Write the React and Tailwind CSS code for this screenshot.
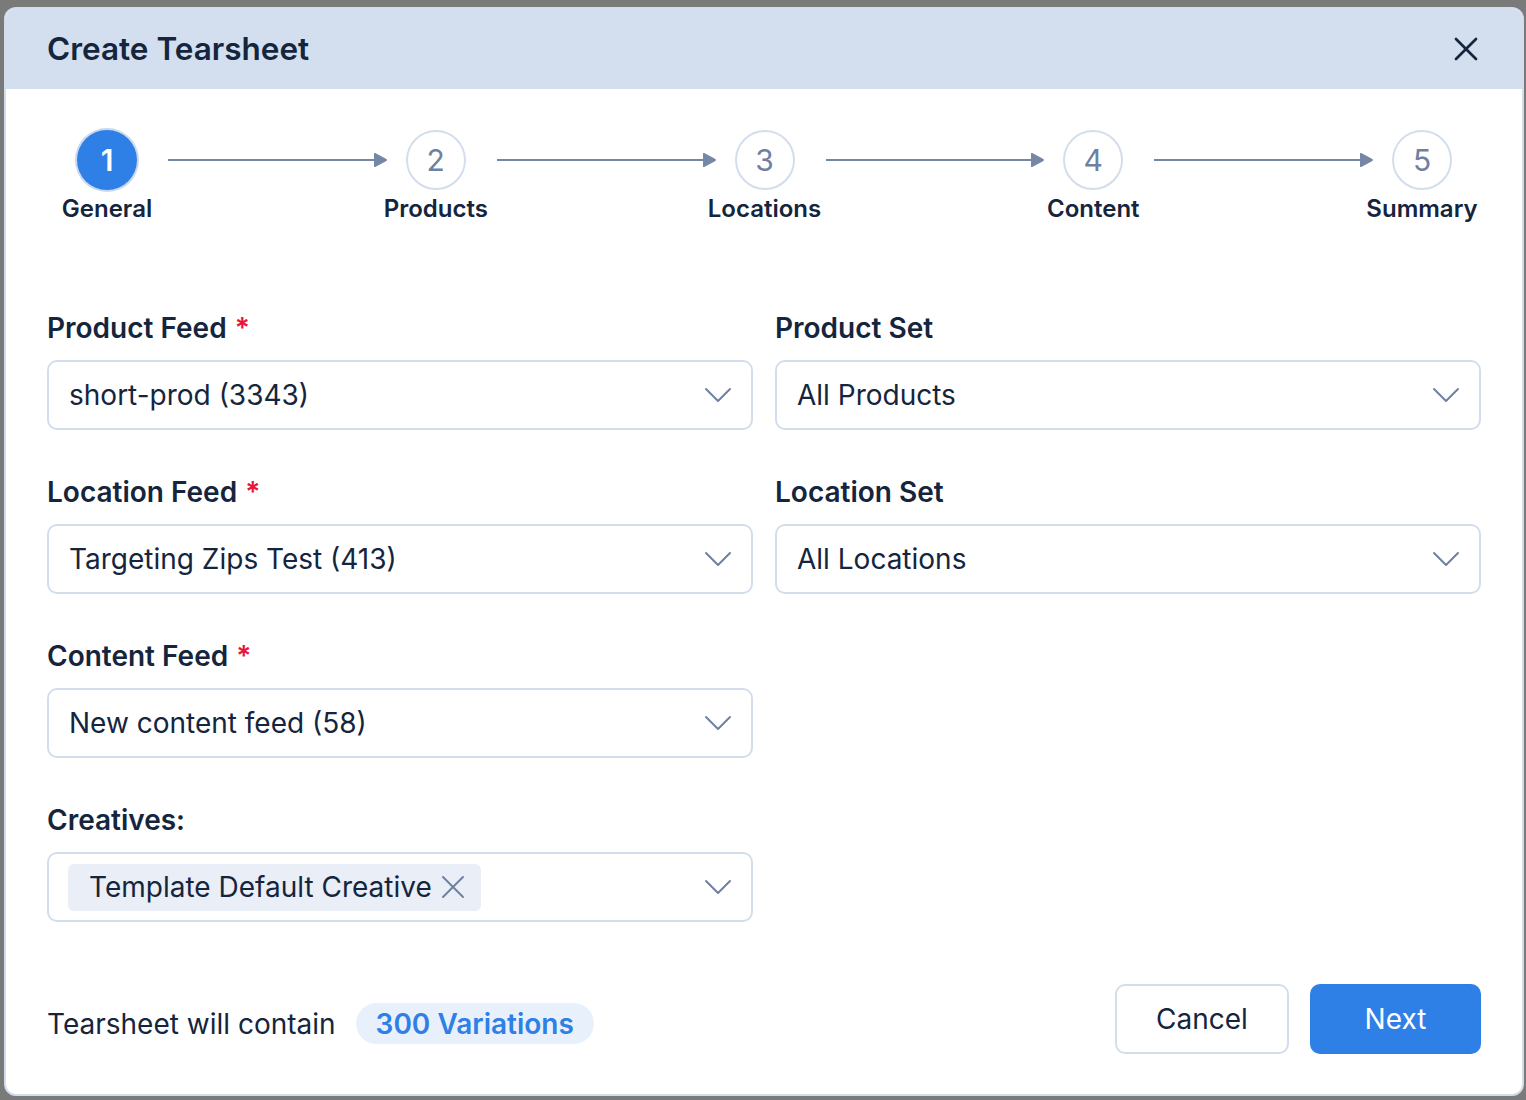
import { X, ChevronDown } from "lucide-react";

const steps = ["General", "Products", "Locations", "Content", "Summary"];

function StepArrow() {
  return (
    <div className="flex-1 flex items-center ml-[31px] mr-[18px] mt-[22px] self-start">
      <div className="flex-1 h-[2px] bg-[#7587a6]" />
      <svg width="15" height="16" viewBox="0 0 15 16" className="-ml-[1px]">
        <path d="M1 1.8 Q1 0.6 2.2 1.1 L13.4 7 Q14.6 8 13.4 9 L2.2 14.9 Q1 15.4 1 14.2 Z" fill="#7587a6" />
      </svg>
    </div>
  );
}

function Step({ n, label, active }) {
  return (
    <div className="w-[60px] flex flex-col items-center">
      {active ? (
        <div className="w-[60px] h-[60px] rounded-full bg-[#2e7fe6] ring-2 ring-[#c9d8ef] flex items-center justify-center text-white text-[30px] font-semibold">
          {n}
        </div>
      ) : (
        <div className="w-[60px] h-[60px] rounded-full border-2 border-[#d3deed] bg-white flex items-center justify-center text-[#6e81a2] text-[30px]">
          {n}
        </div>
      )}
      <div className="mt-[4px] flex justify-center w-[60px]">
        <span className="whitespace-nowrap text-[24px] leading-[30px] font-semibold text-[#14253d]">
          {label}
        </span>
      </div>
    </div>
  );
}

function Field({ label, required, children }) {
  return (
    <div className="flex flex-col">
      <div className="h-[32px] flex items-center mb-[16px] text-[28px] font-semibold text-[#14253d]">
        {label}
        {required && <span className="ml-[8px] text-[#e8173a]">*</span>}
      </div>
      {children}
    </div>
  );
}

function Select({ children }) {
  return (
    <div className="h-[70px] rounded-[10px] border-2 border-[#d3deed] bg-white flex items-center pl-[20px] pr-[9px]">
      <div className="flex-1 flex items-center text-[28px] text-[#14253d] min-w-0">
        {children}
      </div>
      <ChevronDown size={48} strokeWidth={1} className="text-[#6e81a2]" />
    </div>
  );
}

export default function App() {
  return (
    <div className="min-h-screen bg-[#7a7a7a] pt-[7px] pl-[4px] pr-[2px] font-['Inter','Noto_Sans',sans-serif]">
      <div className="w-[1520px] rounded-[12px] border-2 border-[#d3deed] bg-white overflow-hidden flex flex-col">
        {/* header */}
        <header className="h-[80px] bg-[#d3dfee] flex items-center justify-between pl-[41px] pr-[36px]">
          <h1 className="text-[31.5px] font-semibold text-[#14253d]">
            Create Tearsheet
          </h1>
          <X size={40} strokeWidth={1.6} className="text-[#14253d]" />
        </header>

        <div className="px-[41px] pt-[41px] pb-[40px] flex flex-col">
          {/* stepper */}
          <div className="flex items-start pl-[30px] pr-[29px]">
            {steps.map((s, i) => (
              <div key={s} className={i < steps.length - 1 ? "flex-1 flex" : "flex"}>
                <Step n={i + 1} label={s} active={i === 0} />
                {i < steps.length - 1 && <StepArrow />}
              </div>
            ))}
          </div>

          {/* fields */}
          <div className="mt-[88px] grid grid-cols-2 gap-x-[22px] gap-y-[46px]">
            <Field label="Product Feed" required>
              <Select>short-prod (3343)</Select>
            </Field>
            <Field label="Product Set">
              <Select>All Products</Select>
            </Field>
            <Field label="Location Feed" required>
              <Select>Targeting Zips Test (413)</Select>
            </Field>
            <Field label="Location Set">
              <Select>All Locations</Select>
            </Field>
            <Field label="Content Feed" required>
              <Select>New content feed (58)</Select>
            </Field>
            <div />
            <Field label="Creatives:">
              <Select>
                <span className="-ml-[1px] h-[47px] rounded-[6px] bg-[#e9eef7] flex items-center pl-[21px] pr-[8px] gap-[1px]">
                  Template Default Creative
                  <X size={40} strokeWidth={1.2} className="text-[#6e81a2]" />
                </span>
              </Select>
            </Field>
            <div />
          </div>

          {/* footer */}
          <div className="mt-[62px] flex items-center justify-between">
            <div className="flex items-center gap-[20px] pt-[9px]">
              <span className="text-[28px] text-[#14253d]">Tearsheet will contain</span>
              <span className="h-[41px] rounded-full bg-[#e8f0fc] px-[20px] flex items-center text-[28px] font-semibold text-[#2e7fe6]">
                300 Variations
              </span>
            </div>
            <div className="flex items-center gap-[21px]">
              <button className="w-[174px] h-[70px] rounded-[10px] border-2 border-[#d3deed] bg-white text-[28px] text-[#14253d]">
                Cancel
              </button>
              <button className="w-[171px] h-[70px] rounded-[10px] bg-[#2e7fe6] text-[28px] text-white">
                Next
              </button>
            </div>
          </div>
        </div>
      </div>
    </div>
  );
}
